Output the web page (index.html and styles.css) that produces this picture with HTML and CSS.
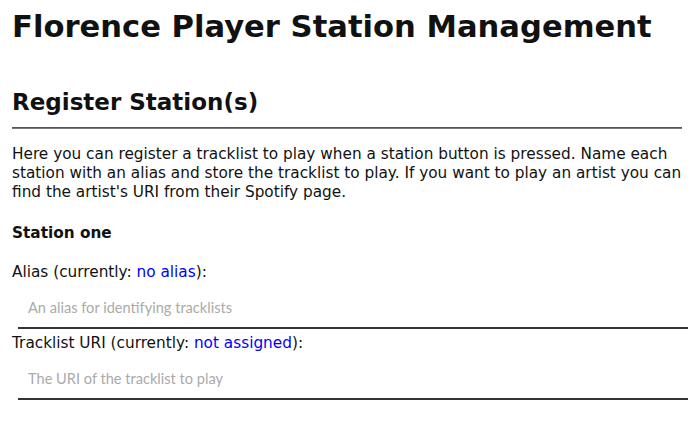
FILE: index.html
```html
<!DOCTYPE html>
<html lang="en">
<head>
<meta charset="utf-8">
<title>Florence Player Station Management</title>
<link rel="stylesheet" href="styles.css">
</head>
<body>
<main class="page">
  <h1 class="title">Florence Player Station Management</h1>
  <h2 class="section-title">Register Station(s)</h2>
  <hr class="rule">
  <p class="intro">Here you can register a tracklist to play when a station button is pressed. Name each station with an alias and store the tracklist to play. If you want to play an artist you can find the artist's URI from their Spotify page.</p>
  <form class="station">
    <h4 class="station-name">Station one</h4>
    <label class="field-label" for="alias">Alias (currently: <span class="current">no alias</span>):</label>
    <input class="field-input" id="alias" type="text" placeholder="An alias for identifying tracklists">
    <label class="field-label" for="uri">Tracklist URI (currently: <span class="current">not assigned</span>):</label>
    <input class="field-input" id="uri" type="text" placeholder="The URI of the tracklist to play">
  </form>
</main>
</body>
</html>
```

FILE: styles.css
```css
html, body {
  margin: 0;
  padding: 0;
  background: #fff;
}

body {
  font-family: "DejaVu Sans", sans-serif;
  font-size: 15.3px;
  line-height: 19px;
  color: #111;
}

.page {
  width: 670px;
  padding: 8px 0 0 12px;
}

.title {
  font-size: 30.6px;
  line-height: 37px;
  font-weight: bold;
  margin: 0 0 43px 0;
}

.section-title {
  font-size: 23px;
  line-height: 28px;
  font-weight: bold;
  margin: 0 0 11px 0;
}

.rule {
  border: 0;
  border-top: 1px solid #555;
  border-bottom: 1px solid #777;
  margin: 0 0 16px 0;
}

.intro {
  margin: 0;
}

.station {
  margin: 0;
}

.station-name {
  font-size: 15.3px;
  font-weight: bold;
  margin: 22px 0 20px 0;
}

.field-label {
  display: block;
}

.current {
  color: #0000ff;
}

.field-input {
  display: block;
  box-sizing: border-box;
  width: 100%;
  margin: 10px 0 5px 6px;
  padding: 7px 10px 11px 10px;
  border: 0;
  border-bottom: 2px solid #333;
  font-family: Lato, sans-serif;
  font-size: 14.6px;
  color: #111;
  background: transparent;
  outline: none;
}

.field-input::placeholder {
  color: #aaa;
}
```
